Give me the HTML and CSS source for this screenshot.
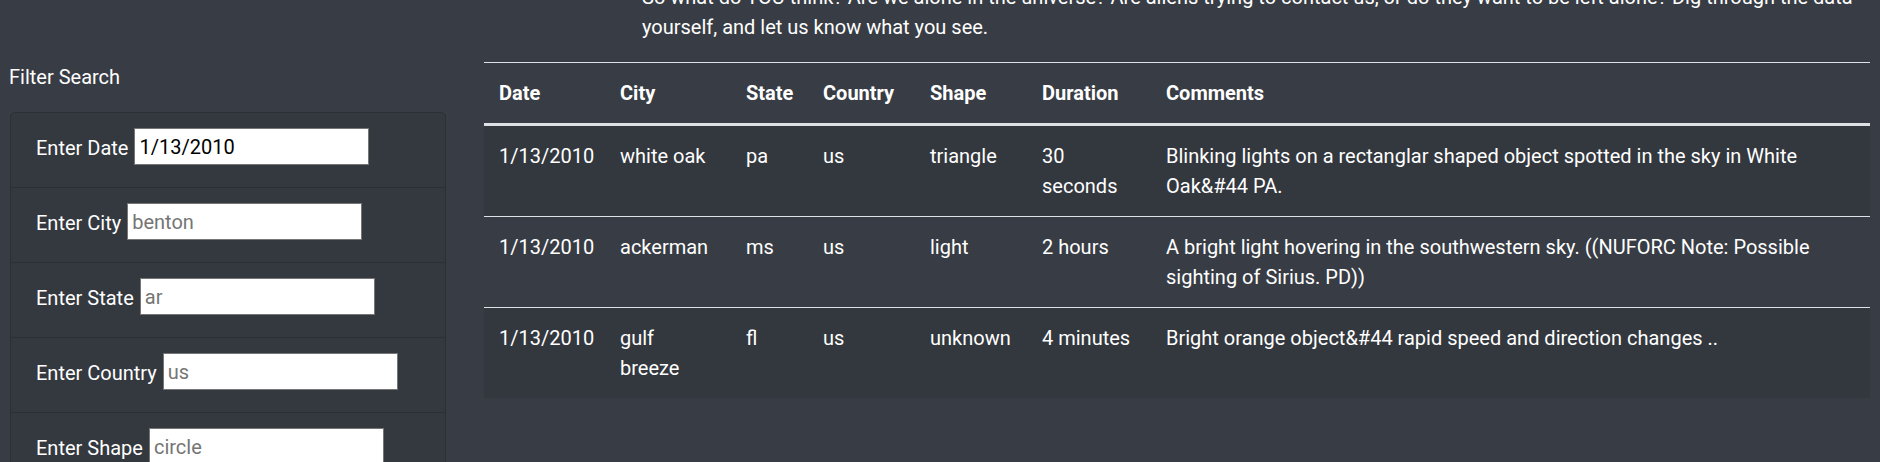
FILE: index.html
```html
<!DOCTYPE html>
<html lang="en">
<head>
<meta charset="utf-8">
<title>UFO Sightings</title>
<link rel="stylesheet" href="styles.css">
</head>
<body>
<div class="page">
  <p class="intro">So what do YOU think? Are we alone in the universe? Are aliens trying to contact us, or do they want to be left alone? Dig through the data yourself, and let us know what you see.</p>
  <div class="main">
    <aside class="filters">
      <div class="filter-title">Filter Search</div>
      <ul class="filter-list">
        <li class="filter-item"><label for="datetime">Enter Date</label><input id="datetime" class="filter-input" type="text" value="1/13/2010"></li>
        <li class="filter-item"><label for="city">Enter City</label><input id="city" class="filter-input" type="text" placeholder="benton"></li>
        <li class="filter-item"><label for="state">Enter State</label><input id="state" class="filter-input" type="text" placeholder="ar"></li>
        <li class="filter-item"><label for="country">Enter Country</label><input id="country" class="filter-input" type="text" placeholder="us"></li>
        <li class="filter-item"><label for="shape">Enter Shape</label><input id="shape" class="filter-input" type="text" placeholder="circle"></li>
      </ul>
    </aside>
    <section class="results">
      <table class="ufo-table">
        <colgroup>
          <col class="c-date"><col class="c-city"><col class="c-state"><col class="c-country"><col class="c-shape"><col class="c-duration"><col>
        </colgroup>
        <thead>
          <tr><th>Date</th><th>City</th><th>State</th><th>Country</th><th>Shape</th><th>Duration</th><th>Comments</th></tr>
        </thead>
        <tbody>
          <tr><td>1/13/2010</td><td>white oak</td><td>pa</td><td>us</td><td>triangle</td><td>30 seconds</td><td>Blinking lights on a rectanglar shaped object spotted in the sky in White Oak&amp;#44 PA.</td></tr>
          <tr><td>1/13/2010</td><td>ackerman</td><td>ms</td><td>us</td><td>light</td><td>2 hours</td><td>A bright light hovering in the southwestern sky. ((NUFORC Note: Possible sighting of Sirius. PD))</td></tr>
          <tr><td>1/13/2010</td><td>gulf breeze</td><td>fl</td><td>us</td><td>unknown</td><td>4 minutes</td><td>Bright orange object&amp;#44 rapid speed and direction changes ..</td></tr>
        </tbody>
      </table>
    </section>
  </div>
</div>
</body>
</html>
```

FILE: styles.css
```css
html, body {
  margin: 0;
  padding: 0;
}

body {
  background: #383c44;
  color: #ffffff;
  font-family: Roboto, "Liberation Sans", sans-serif;
  font-size: 20px;
  line-height: 30px;
  overflow: hidden;
}

.page {
  padding: 0 10px;
}

.intro {
  margin: -18px 0 20px 632px;
}

.main {
  display: flex;
  align-items: flex-start;
  gap: 38px;
}

.filters {
  flex: none;
  width: 436px;
}

.filter-title {
  margin-left: -1px;
  margin-bottom: 20px;
}

.filter-list {
  list-style: none;
  margin: 0;
  padding: 0;
  background: #34383f;
  border: 1px solid #2c2f35;
  border-radius: 5px;
}

.filter-item {
  display: flex;
  align-items: flex-start;
  gap: 6px;
  height: 44px;
  padding: 15px 25px;
}

.filter-item + .filter-item {
  border-top: 1px solid #2c2f35;
}

.filter-item label {
  padding-top: 2px;
  line-height: 37px;
}

.filter-input {
  box-sizing: border-box;
  width: 235px;
  height: 37px;
  margin: 0;
  padding: 0 4px;
  border: 1px solid #767676;
  border-radius: 0;
  background: #ffffff;
  color: #000000;
  font-family: inherit;
  font-size: 20px;
}

.filter-input::placeholder {
  color: #757575;
}

.results {
  flex: 1;
  min-width: 0;
}

.ufo-table {
  width: 100%;
  table-layout: fixed;
  border-collapse: collapse;
  color: #ffffff;
}

.c-date { width: 121px; }
.c-city { width: 126px; }
.c-state { width: 77px; }
.c-country { width: 107px; }
.c-shape { width: 112px; }
.c-duration { width: 124px; }

.ufo-table th,
.ufo-table td {
  padding: 15px;
  text-align: left;
  vertical-align: top;
  border-top: 1px solid #dee2e6;
}

.ufo-table th {
  font-weight: 700;
  border-bottom: 3px solid #dee2e6;
}

.ufo-table tbody tr:first-child td {
  border-top: 0;
}

.ufo-table tbody tr:nth-child(odd) {
  background: #33373e;
}
```
